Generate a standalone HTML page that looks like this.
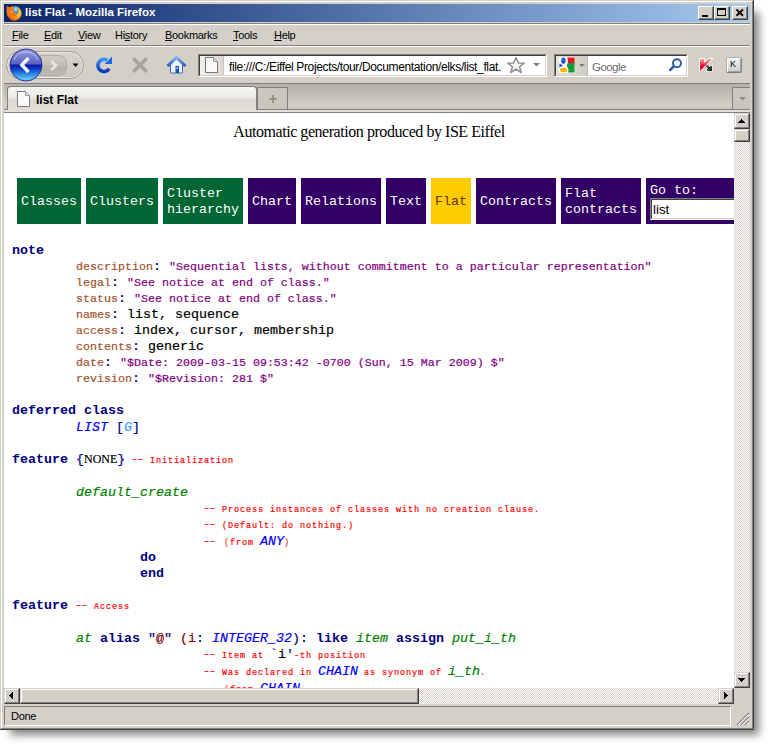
<!DOCTYPE html>
<html><head><meta charset="utf-8">
<style>
*{box-sizing:border-box}
html,body{margin:0;padding:0}
body{width:770px;height:746px;position:relative;overflow:hidden;background:#fff;font-family:"Liberation Sans",sans-serif}
.a{position:absolute}
#win{left:0;top:0;width:754px;height:730px;background:#d4d0c8}
#shd{left:10px;top:12px;width:749px;height:723px;background:rgba(0,0,0,0.48);filter:blur(4px)}
.ui{position:absolute;font-family:"Liberation Sans",sans-serif;font-size:12px;color:#000;white-space:nowrap;line-height:16px}
.mn{font-size:11px;letter-spacing:-0.3px}
.u{text-decoration:underline;text-underline-offset:1px}
.btn3d{position:absolute;background:#d4d0c8;border-style:solid;border-width:1px;border-color:#fff #404040 #404040 #fff;box-shadow:inset -1px -1px 0 #808080, inset 1px 1px 0 #d4d0c8}
.sb3d{position:absolute;background:#d4d0c8;border-style:solid;border-width:1px;border-color:#d4d0c8 #404040 #404040 #d4d0c8;box-shadow:inset -1px -1px 0 #808080, inset 1px 1px 0 #fff}
.chk{background-color:#fff;background-image:linear-gradient(45deg,#d4d0c8 25%,transparent 25%,transparent 75%,#d4d0c8 75%),linear-gradient(45deg,#d4d0c8 25%,transparent 25%,transparent 75%,#d4d0c8 75%);background-size:2px 2px;background-position:0 0,1px 1px}
.mono{font-family:"Liberation Mono",monospace;white-space:pre;-webkit-text-stroke:0.2px currentColor}
.mono b{-webkit-text-stroke:0}
.serif{font-family:"Liberation Serif",serif}
</style></head><body>
<div id="shd" class="a"></div>
<div id="win" class="a">
  <!-- frame lines -->
  <div class="a" style="left:1px;top:1px;width:751px;height:1px;background:#fff"></div>
  <div class="a" style="left:1px;top:1px;width:1px;height:727px;background:#fff"></div>
  <div class="a" style="left:752px;top:1px;width:1px;height:728px;background:#808080"></div>
  <div class="a" style="left:1px;top:728px;width:752px;height:1px;background:#808080"></div>
  <div class="a" style="left:753px;top:0;width:1px;height:730px;background:#404040"></div>
  <div class="a" style="left:0;top:729px;width:754px;height:1px;background:#404040"></div>

  <!-- title bar -->
  <div class="a" style="left:4px;top:4px;width:746px;height:18px;background:linear-gradient(to right,#0a246a,#a6caf0)"></div>
  <svg class="a" style="left:6px;top:5px" width="16" height="16" viewBox="0 0 16 16">
    <defs>
      <radialGradient id="glb" cx="0.5" cy="0.3" r="0.7"><stop offset="0" stop-color="#a8f0ff"/><stop offset="0.5" stop-color="#3a98e0"/><stop offset="1" stop-color="#1a3a90"/></radialGradient>
      <radialGradient id="fox" cx="0.75" cy="0.45" r="0.8"><stop offset="0" stop-color="#ffe040"/><stop offset="0.35" stop-color="#f8a020"/><stop offset="0.8" stop-color="#e06010"/><stop offset="1" stop-color="#b03008"/></radialGradient>
    </defs>
    <circle cx="9.6" cy="6" r="4.8" fill="url(#glb)"/>
    <path fill-rule="evenodd" fill="url(#fox)" d="M11.8,1.8 A7.4,7.4 0 1 1 2.2,4 L5.2,8.8 A3.9,3.9 0 1 0 11.4,3.6 Z"/>
    <path fill="#f07818" d="M0.8,0.5 L2.6,2.2 L5,1.8 L6.8,0.8 L7.2,3.2 L8.6,4.4 L7.6,6 L8.4,7.6 L10.6,8.6 L10.2,10.8 L7.8,10.2 L5.6,9.4 L4,11.5 L1.2,10.5 L0.4,6.5 Z"/>
    <path fill="#ffd090" d="M4,6.5 L6.5,6 L6,7.5 L4.5,7.5 Z" opacity="0.7"/>
  </svg>
  <div class="ui" style="left:25px;top:6px;color:#fff;font-weight:bold;font-size:11.5px;line-height:13px">list Flat - Mozilla Firefox</div>
  <!-- caption buttons -->
  <div class="btn3d" style="left:698px;top:6px;width:16px;height:14px"></div>
  <div class="a" style="left:702px;top:15px;width:6px;height:2px;background:#000"></div>
  <div class="btn3d" style="left:714px;top:6px;width:16px;height:14px"></div>
  <div class="a" style="left:717px;top:8px;width:9px;height:8px;border:1px solid #000;border-top-width:2px"></div>
  <div class="btn3d" style="left:732px;top:6px;width:16px;height:14px"></div>
  <svg class="a" style="left:732px;top:6px" width="16" height="14" viewBox="0 0 16 14"><path d="M4.5,3.5 L11,9.8 M11,3.5 L4.5,9.8" stroke="#000" stroke-width="1.9"/></svg>

  <!-- menubar separators -->
  <div class="a" style="left:4px;top:23px;width:746px;height:1px;background:#808080"></div>
  <div class="a" style="left:4px;top:24px;width:746px;height:1px;background:#fff"></div>
  <div class="ui mn" style="left:12px;top:27px"><span class="u">F</span>ile</div>
  <div class="ui mn" style="left:44px;top:27px"><span class="u">E</span>dit</div>
  <div class="ui mn" style="left:78px;top:27px"><span class="u">V</span>iew</div>
  <div class="ui mn" style="left:115px;top:27px">Hi<span class="u">s</span>tory</div>
  <div class="ui mn" style="left:165px;top:27px"><span class="u">B</span>ookmarks</div>
  <div class="ui mn" style="left:233px;top:27px"><span class="u">T</span>ools</div>
  <div class="ui mn" style="left:274px;top:27px"><span class="u">H</span>elp</div>
  <div class="a" style="left:4px;top:45px;width:746px;height:1px;background:#808080"></div>
  <div class="a" style="left:4px;top:46px;width:746px;height:1px;background:#fff"></div>

  <!-- nav toolbar -->
  <div class="a" style="left:6px;top:51px;width:78px;height:28px;border-radius:14px;background:linear-gradient(#d8d5ce,#ccc8c0);border:1px solid #a29e96;box-shadow:inset 0 0 0 1px #ebe8e2"></div>
  <div class="a" style="left:40px;top:55px;width:27px;height:21px;border-radius:0 8px 8px 0;background:linear-gradient(#cfcbc3 0%,#c4c0b8 50%,#b6b2aa 51%,#bebab2 100%);border:1px solid #b0aca4"></div>
  <svg class="a" style="left:47px;top:59px" width="14" height="13" viewBox="0 0 14 13"><path d="M4,2 L9,6.5 L4,11" fill="none" stroke="#e8e6e0" stroke-width="2.6"/></svg>
  <svg class="a" style="left:72px;top:63px" width="7" height="5" viewBox="0 0 7 5"><path d="M0.5,0.5 L6.5,0.5 L3.5,4 Z" fill="#000"/></svg>
  <svg class="a" style="left:9px;top:48px" width="35" height="35" viewBox="0 0 35 35">
    <defs>
      <linearGradient id="bk" x1="0" y1="0" x2="0" y2="1"><stop offset="0" stop-color="#9aa0e4"/><stop offset="0.47" stop-color="#5860c0"/><stop offset="0.5" stop-color="#0a14a0"/><stop offset="0.62" stop-color="#0a40c8"/><stop offset="1" stop-color="#68e0ff"/></linearGradient>
    </defs>
    <circle cx="17" cy="17" r="16" fill="url(#bk)" stroke="#2a2f9a" stroke-width="1"/><path d="M5,12 A13,13 0 0 1 29,12" fill="none" stroke="#c8ccf4" stroke-width="1" opacity="0.8"/>
    <path d="M19.5,10 L12.8,17 L19.5,24" fill="none" stroke="#f0f0f0" stroke-width="3.4" stroke-linejoin="miter"/>
  </svg>
  <!-- reload -->
  <svg class="a" style="left:95px;top:55px" width="19" height="19" viewBox="0 0 19 19">
    <defs><linearGradient id="rl" x1="0" y1="0" x2="0" y2="1"><stop offset="0" stop-color="#3c8ef0"/><stop offset="1" stop-color="#0838c0"/></linearGradient></defs>
    <path d="M12.2,5.2 A6.1,6.1 0 1 0 14.2,13.6" fill="none" stroke="url(#rl)" stroke-width="3.6"/>
    <path d="M9.6,9 L17,9 L17,1.6 Z" fill="#1a6ae8"/>
  </svg>
  <!-- stop -->
  <svg class="a" style="left:131px;top:56px" width="18" height="18" viewBox="0 0 18 18"><path d="M2.2,2.2 L15.8,15.8 M15.8,2.2 L2.2,15.8" stroke="#a6a49c" stroke-width="3.6"/></svg>
  <!-- home -->
  <svg class="a" style="left:166px;top:55px" width="21" height="19" viewBox="0 0 21 19">
    <defs><linearGradient id="hm" x1="0" y1="0" x2="0" y2="1"><stop offset="0" stop-color="#80b4f4"/><stop offset="1" stop-color="#2a58b8"/></linearGradient></defs>
    <path d="M4.5,9 L10.5,3.5 L16.5,9 L16.5,18 L4.5,18 Z" fill="#eaf3ff" stroke="#3a68c0" stroke-width="1"/>
    <path d="M1.5,11 L10.5,2.5 L19.5,11" fill="none" stroke="url(#hm)" stroke-width="3" stroke-linejoin="miter"/>
    <rect x="9.5" y="11" width="3.5" height="7" fill="#2050b0"/>
    <rect x="10.5" y="12" width="1.5" height="2" fill="#9cc0f0"/>
  </svg>
  <!-- url bar -->
  <div class="a" style="left:198px;top:54px;width:349px;height:23px;background:#fff;border-style:solid;border-width:1px;border-color:#808080 #fff #fff #808080"></div>
  <div class="a" style="left:199px;top:55px;width:347px;height:21px;border-style:solid;border-width:1px;border-color:#404040 #d4d0c8 #d4d0c8 #404040"></div>
  <div class="a" style="left:200px;top:56px;width:24px;height:19px;background:linear-gradient(to right,#f2f1ee,#dcd9d2);border-right:1px solid #c8c4bc"></div>
  <svg class="a" style="left:205px;top:57px" width="13" height="16" viewBox="0 0 13 16"><path d="M0.5,0.5 L8.5,0.5 L12.5,4.5 L12.5,15.5 L0.5,15.5 Z" fill="#f8f8f8" stroke="#777"/><path d="M8.5,0.5 L8.5,4.5 L12.5,4.5" fill="#ddd" stroke="#999"/></svg>
  <div class="ui" style="left:229px;top:59px;font-size:12px;letter-spacing:-0.36px">file:///C:/Eiffel Projects/tour/Documentation/elks/list_flat.</div>
  <svg class="a" style="left:506px;top:56px" width="20" height="18" viewBox="0 0 20 18"><path d="M10,1.5 L12.4,7 L18.2,7.2 L13.6,10.8 L15.3,16.5 L10,13.2 L4.7,16.5 L6.4,10.8 L1.8,7.2 L7.6,7 Z" fill="#f4f4f4" stroke="#909090" stroke-width="1.5" stroke-linejoin="round"/></svg>
  <svg class="a" style="left:533px;top:63px" width="7" height="4" viewBox="0 0 7 4"><path d="M0,0 L7,0 L3.5,3.5 Z" fill="#7a7a7a"/></svg>
  <!-- search bar -->
  <div class="a" style="left:554px;top:54px;width:134px;height:23px;background:#fff;border-style:solid;border-width:1px;border-color:#808080 #fff #fff #808080"></div>
  <div class="a" style="left:555px;top:55px;width:132px;height:21px;border-style:solid;border-width:1px;border-color:#404040 #d4d0c8 #d4d0c8 #404040"></div>
  <div class="a" style="left:556px;top:56px;width:32px;height:19px;background:linear-gradient(to right,#e4e2dc,#d0ccc4);border-right:1px solid #bdb9b1"></div>
  <svg class="a" style="left:559px;top:57px" width="16" height="16" viewBox="0 0 16 16">
    <rect x="0" y="0" width="16" height="16" rx="1.5" fill="#fff"/>
    <path d="M8.2,0.6 L15,0.6 Q15.6,0.6 15.6,1.5 L15.6,6.2 L8.6,6.2 Q9.6,3.2 8.2,0.6 Z" fill="#e8141a"/>
    <path d="M8.8,6 L15.6,6 L15.6,15.4 L9,15.4 Q10.2,12.5 8.6,10.6 Q7.2,9.2 8.8,6 Z" fill="#159a3a"/>
    <ellipse cx="4.4" cy="3.7" rx="2.3" ry="3.1" fill="#1a5fd0"/>
    <path d="M0.4,6.6 L4.2,8.6 L0.4,10.4 Z" fill="#1a5fd0"/>
    <ellipse cx="4.6" cy="13" rx="3.6" ry="2.3" fill="#f4b400"/>
  </svg>
  <svg class="a" style="left:579px;top:64px" width="6" height="4" viewBox="0 0 6 4"><path d="M0,0 L6,0 L3,3 Z" fill="#808080"/></svg>
  <div class="ui" style="left:592px;top:59px;font-size:11.5px;letter-spacing:-0.55px;color:#6d6d6d">Google</div>
  <svg class="a" style="left:668px;top:58px" width="15" height="14" viewBox="0 0 15 14"><circle cx="9" cy="5.2" r="4" fill="none" stroke="#2a5ea8" stroke-width="2"/><path d="M6.2,8 L1.5,12.7" stroke="#2a5ea8" stroke-width="2.6"/></svg>
  <!-- kaspersky -->
  <svg class="a" style="left:698px;top:57px" width="16" height="16" viewBox="0 0 16 16">
    <defs><linearGradient id="kr" x1="0" y1="0" x2="0" y2="1"><stop offset="0" stop-color="#f4b0b0"/><stop offset="0.45" stop-color="#e83040"/><stop offset="0.6" stop-color="#e00010"/><stop offset="1" stop-color="#e00010"/></linearGradient>
    <linearGradient id="ka" x1="0" y1="0" x2="1" y2="1"><stop offset="0" stop-color="#9a9a9a"/><stop offset="1" stop-color="#000"/></linearGradient></defs>
    <path d="M1.5,1.5 L6.5,1.5 L6.5,5.5 L10.5,1.5 L15,1.5 L1.5,15 Z" fill="url(#kr)" stroke="#fff" stroke-width="1" stroke-linejoin="round"/>
    <path d="M8,8 L10.5,10.5 L12.5,8.5 L14.5,8.5 L14.5,14.5 L8.5,14.5 L8.5,12.5 L10.5,10.5" fill="url(#ka)" stroke="#fff" stroke-width="0.8"/>
    <path d="M8,8 L11.5,11.5" stroke="url(#ka)" stroke-width="2.2"/>
  </svg>
  <div class="a" style="left:726px;top:57px;width:16px;height:16px;border-radius:2px;background:linear-gradient(#f2f2f2,#cfcfcf);border:1px solid;border-color:#b8b8b8 #8a8a8a #7a7a7a #a8a8a8;box-shadow:inset 1px 1px 0 #fff, inset -1px -1px 0 #a0a0a0"></div>
  <div class="ui" style="left:730px;top:60px;font-size:9px;line-height:9px;color:#000">K</div>
  <div class="a" style="left:4px;top:83px;width:746px;height:1px;background:#808080"></div>

  <!-- tab bar -->
  <div class="a" style="left:4px;top:84px;width:746px;height:25px;background:linear-gradient(#b3b0a8,#cfcbc3 75%,#d4d0c8 85%,#c9c5bd)"></div>
  <div class="a" style="left:4px;top:109px;width:746px;height:1px;background:#808080"></div>
  <div class="a" style="left:4px;top:110px;width:746px;height:2px;background:#e2dfd8"></div>
  <div class="a" style="left:4px;top:112px;width:746px;height:1px;background:#808080"></div>
  <!-- active tab -->
  <div class="a" style="left:7px;top:86px;width:250px;height:24px;border:1px solid #808080;border-bottom:none;border-radius:4px 4px 0 0;background:linear-gradient(#f5f4f1,#eceae5 45%,#dcd9d2 55%,#e2dfd8)"></div>
  <div class="a" style="left:8px;top:109px;width:248px;height:1px;background:#e2dfd8"></div>
  <svg class="a" style="left:17px;top:91px" width="13" height="16" viewBox="0 0 13 16"><path d="M0.5,0.5 L8.5,0.5 L12.5,4.5 L12.5,15.5 L0.5,15.5 Z" fill="#fafafa" stroke="#7a7a7a"/><path d="M8.5,0.5 L8.5,4.5 L12.5,4.5" fill="#e0e0e0" stroke="#9a9a9a"/></svg>
  <div class="ui" style="left:36px;top:92px;font-weight:bold;font-size:12px">list Flat</div>
  <!-- new tab btn -->
  <div class="a" style="left:257px;top:87px;width:31px;height:22px;border:1px solid #808080;border-bottom:none;background:linear-gradient(#cbc8c0,#c9c5bd)"></div>
  <svg class="a" style="left:269px;top:95px" width="8" height="8" viewBox="0 0 8 8"><path d="M4,0 L4,8 M0,4 L8,4" stroke="#858585" stroke-width="1.5"/></svg>
  <!-- tab list btn -->
  <div class="a" style="left:732px;top:87px;width:18px;height:22px;border-left:1px solid #808080;border-top:1px solid #808080;background:linear-gradient(#cbc8c0,#c9c5bd)"></div>
  <svg class="a" style="left:739px;top:97px" width="7" height="4" viewBox="0 0 7 4"><path d="M0,0 L7,0 L3.5,3.5 Z" fill="#8a8a8a"/></svg>

  <!-- content -->
  <div class="a" style="left:4px;top:113px;width:730px;height:575px;background:#fff;overflow:hidden">
<div class="serif" style="position:absolute;left:0;top:11px;width:730px;text-align:center;font-size:16px;letter-spacing:-0.45px;line-height:16px;color:#000;white-space:nowrap">Automatic generation produced by ISE Eiffel</div>
<div style="position:absolute;left:13px;top:65px;width:64px;height:46px;background:#006633"></div>
<div class="mono" style="position:absolute;left:17px;top:81px;font-size:13.333px;line-height:16px;-webkit-text-stroke:0;color:#fff">Classes</div>
<div style="position:absolute;left:82px;top:65px;width:72px;height:46px;background:#006633"></div>
<div class="mono" style="position:absolute;left:86px;top:81px;font-size:13.333px;line-height:16px;-webkit-text-stroke:0;color:#fff">Clusters</div>
<div style="position:absolute;left:159px;top:65px;width:80px;height:46px;background:#006633"></div>
<div class="mono" style="position:absolute;left:163px;top:73px;font-size:13.333px;line-height:16px;-webkit-text-stroke:0;color:#fff">Cluster
hierarchy</div>
<div style="position:absolute;left:244px;top:65px;width:48px;height:46px;background:#330066"></div>
<div class="mono" style="position:absolute;left:248px;top:81px;font-size:13.333px;line-height:16px;-webkit-text-stroke:0;color:#fff">Chart</div>
<div style="position:absolute;left:297px;top:65px;width:80px;height:46px;background:#330066"></div>
<div class="mono" style="position:absolute;left:301px;top:81px;font-size:13.333px;line-height:16px;-webkit-text-stroke:0;color:#fff">Relations</div>
<div style="position:absolute;left:382px;top:65px;width:40px;height:46px;background:#330066"></div>
<div class="mono" style="position:absolute;left:386px;top:81px;font-size:13.333px;line-height:16px;-webkit-text-stroke:0;color:#fff">Text</div>
<div style="position:absolute;left:427px;top:65px;width:40px;height:46px;background:#ffcc00"></div>
<div class="mono" style="position:absolute;left:431px;top:81px;font-size:13.333px;line-height:16px;-webkit-text-stroke:0;color:#663300">Flat</div>
<div style="position:absolute;left:472px;top:65px;width:80px;height:46px;background:#330066"></div>
<div class="mono" style="position:absolute;left:476px;top:81px;font-size:13.333px;line-height:16px;-webkit-text-stroke:0;color:#fff">Contracts</div>
<div style="position:absolute;left:557px;top:65px;width:80px;height:46px;background:#330066"></div>
<div class="mono" style="position:absolute;left:561px;top:73px;font-size:13.333px;line-height:16px;-webkit-text-stroke:0;color:#fff">Flat
contracts</div>
<div style="position:absolute;left:642px;top:65px;width:200px;height:46px;background:#330066"></div>
<div class="mono" style="position:absolute;left:646px;top:70px;font-size:13.333px;line-height:16px;-webkit-text-stroke:0;color:#fff">Go to:</div>
<div style="position:absolute;left:646px;top:85px;width:160px;height:22px;background:#fff;border-style:solid;border-width:1px;border-color:#808080 #fff #fff #808080"></div>
<div style="position:absolute;left:647px;top:86px;width:158px;height:20px;border-style:solid;border-width:1px;border-color:#404040 #d4d0c8 #d4d0c8 #404040"></div>
<div class="ui" style="left:649px;top:89px;font-size:13.333px;line-height:16px">list</div>
<div class="mono" style="position:absolute;left:8px;top:130px;font-size:13.333px;line-height:16px;color:#000;"><b style="color:#000080">note</b></div>
<div class="mono" style="position:absolute;left:72px;top:146px;font-size:13.333px;line-height:16px;color:#000;"><span style="color:#a0522d;font-size:11.667px">description</span><span style="color:#000080">:</span> <span style="color:#800080;font-size:11.667px">"Sequential lists, without commitment to a particular representation"</span></div>
<div class="mono" style="position:absolute;left:72px;top:162px;font-size:13.333px;line-height:16px;color:#000;"><span style="color:#a0522d;font-size:11.667px">legal</span><span style="color:#000080">:</span> <span style="color:#800080;font-size:11.667px">"See notice at end of class."</span></div>
<div class="mono" style="position:absolute;left:72px;top:178px;font-size:13.333px;line-height:16px;color:#000;"><span style="color:#a0522d;font-size:11.667px">status</span><span style="color:#000080">:</span> <span style="color:#800080;font-size:11.667px">"See notice at end of class."</span></div>
<div class="mono" style="position:absolute;left:72px;top:194px;font-size:13.333px;line-height:16px;color:#000;"><span style="color:#a0522d;font-size:11.667px">names</span><span style="color:#000080">:</span> list, sequence</div>
<div class="mono" style="position:absolute;left:72px;top:210px;font-size:13.333px;line-height:16px;color:#000;"><span style="color:#a0522d;font-size:11.667px">access</span><span style="color:#000080">:</span> index, cursor, membership</div>
<div class="mono" style="position:absolute;left:72px;top:226px;font-size:13.333px;line-height:16px;color:#000;"><span style="color:#a0522d;font-size:11.667px">contents</span><span style="color:#000080">:</span> generic</div>
<div class="mono" style="position:absolute;left:72px;top:242px;font-size:13.333px;line-height:16px;color:#000;"><span style="color:#a0522d;font-size:11.667px">date</span><span style="color:#000080">:</span> <span style="color:#800080;font-size:11.667px">"$Date: 2009-03-15 09:53:42 -0700 (Sun, 15 Mar 2009) $"</span></div>
<div class="mono" style="position:absolute;left:72px;top:258px;font-size:13.333px;line-height:16px;color:#000;"><span style="color:#a0522d;font-size:11.667px">revision</span><span style="color:#000080">:</span> <span style="color:#800080;font-size:11.667px">"$Revision: 281 $"</span></div>
<div class="mono" style="position:absolute;left:8px;top:290px;font-size:13.333px;line-height:16px;color:#000;"><b style="color:#000080">deferred class</b></div>
<div class="mono" style="position:absolute;left:72px;top:307px;font-size:13.333px;line-height:16px;color:#000;"><i style="color:#0000ff">LIST</i> <span style="color:#000080">[</span><i style="color:#3399ff">G</i><span style="color:#000080">]</span></div>
<div class="mono" style="position:absolute;left:8px;top:339px;font-size:13.333px;line-height:16px;color:#000;"><b style="color:#000080">feature</b> <span style="color:#000080">{</span><span class="serif" style="font-size:12px;line-height:0">NONE</span><span style="color:#000080">}</span></div>
<div class="mono" style="position:absolute;left:128px;top:340px;font-size:8.5px;letter-spacing:0.9px;line-height:16px;color:#ff0000;font-weight:normal;-webkit-text-stroke:0.2px #ff0000"><span style="position:relative;top:-1.5px">––</span> Initialization</div>
<div class="mono" style="position:absolute;left:72px;top:372px;font-size:13.333px;line-height:16px;color:#000;"><i style="color:#008000">default_create</i></div>
<div class="mono" style="position:absolute;left:200px;top:389px;font-size:8.5px;letter-spacing:0.9px;line-height:16px;color:#ff0000;font-weight:normal;-webkit-text-stroke:0.2px #ff0000"><span style="position:relative;top:-1.5px">––</span> Process instances of classes with no creation clause.</div>
<div class="mono" style="position:absolute;left:200px;top:405px;font-size:8.5px;letter-spacing:0.9px;line-height:16px;color:#ff0000;font-weight:normal;-webkit-text-stroke:0.2px #ff0000"><span style="position:relative;top:-1.5px">––</span> <span style="font-weight:normal">(</span>Default: do nothing.<span style="font-weight:normal">)</span></div>
<div class="mono" style="position:absolute;left:200px;top:422px;font-size:8.5px;letter-spacing:0.9px;line-height:16px;color:#ff0000;font-weight:normal;-webkit-text-stroke:0.2px #ff0000"><span style="position:relative;top:-1.5px">––</span> </div>
<div class="mono" style="position:absolute;left:220px;top:422px;font-size:8.5px;letter-spacing:0.9px;line-height:16px;color:#ff0000;font-weight:normal;-webkit-text-stroke:0px #ff0000">(</div>
<div class="mono" style="position:absolute;left:226px;top:422px;font-size:8.5px;letter-spacing:0.9px;line-height:16px;color:#ff0000;font-weight:normal;-webkit-text-stroke:0.2px #ff0000">from</div>
<div class="mono" style="position:absolute;left:256px;top:421px;font-size:13.333px;line-height:16px;color:#000;"><i style="color:#0000ff">ANY</i></div>
<div class="mono" style="position:absolute;left:280px;top:422px;font-size:8.5px;letter-spacing:0.9px;line-height:16px;color:#ff0000;font-weight:normal;-webkit-text-stroke:0px #ff0000">)</div>
<div class="mono" style="position:absolute;left:136px;top:437px;font-size:13.333px;line-height:16px;color:#000;"><b style="color:#000080">do</b></div>
<div class="mono" style="position:absolute;left:136px;top:453px;font-size:13.333px;line-height:16px;color:#000;"><b style="color:#000080">end</b></div>
<div class="mono" style="position:absolute;left:8px;top:485px;font-size:13.333px;line-height:16px;color:#000;"><b style="color:#000080">feature</b></div>
<div class="mono" style="position:absolute;left:72px;top:486px;font-size:8.5px;letter-spacing:0.9px;line-height:16px;color:#ff0000;font-weight:normal;-webkit-text-stroke:0.2px #ff0000"><span style="position:relative;top:-1.5px">––</span> Access</div>
<div class="mono" style="position:absolute;left:72px;top:518px;font-size:13.333px;line-height:16px;color:#000;"><i style="color:#008000">at</i> <b style="color:#000080">alias</b> <span style="color:#000080">"</span><span style="color:#800000">@</span><span style="color:#000080">"</span> <span style="color:#800000">(i</span><span style="color:#000080">:</span> <i style="color:#0000ff">INTEGER_32</i><span style="color:#000080">)</span><span style="color:#000080">:</span> <b style="color:#000080">like</b> <i style="color:#008000">item</i> <b style="color:#000080">assign</b> <i style="color:#008000">put_i_th</i></div>
<div class="mono" style="position:absolute;left:200px;top:535px;font-size:8.5px;letter-spacing:0.9px;line-height:16px;color:#ff0000;font-weight:normal;-webkit-text-stroke:0.2px #ff0000"><span style="position:relative;top:-1.5px">––</span> Item at </div>
<div class="mono" style="position:absolute;left:266px;top:534px;font-size:13.333px;line-height:16px;color:#000;"><span style="color:#000080">`</span>i<span style="color:#000080">'</span></div>
<div class="mono" style="position:absolute;left:290px;top:535px;font-size:8.5px;letter-spacing:0.9px;line-height:16px;color:#ff0000;font-weight:normal;-webkit-text-stroke:0.2px #ff0000">-th position</div>
<div class="mono" style="position:absolute;left:200px;top:552px;font-size:8.5px;letter-spacing:0.9px;line-height:16px;color:#ff0000;font-weight:normal;-webkit-text-stroke:0.2px #ff0000"><span style="position:relative;top:-1.5px">––</span> Was declared in </div>
<div class="mono" style="position:absolute;left:314px;top:551px;font-size:13.333px;line-height:16px;color:#000;"><i style="color:#0000ff">CHAIN</i></div>
<div class="mono" style="position:absolute;left:354px;top:552px;font-size:8.5px;letter-spacing:0.9px;line-height:16px;color:#ff0000;font-weight:normal;-webkit-text-stroke:0.2px #ff0000"> as synonym of </div>
<div class="mono" style="position:absolute;left:444px;top:551px;font-size:13.333px;line-height:16px;color:#000;"><i style="color:#008000">i_th</i></div>
<div class="mono" style="position:absolute;left:476px;top:552px;font-size:8.5px;letter-spacing:0.9px;line-height:16px;color:#ff0000;font-weight:normal;-webkit-text-stroke:0.2px #ff0000">.</div>
<div class="mono" style="position:absolute;left:200px;top:569px;font-size:8.5px;letter-spacing:0.9px;line-height:16px;color:#ff0000;font-weight:normal;-webkit-text-stroke:0.2px #ff0000"><span style="position:relative;top:-1.5px">––</span> </div>
<div class="mono" style="position:absolute;left:220px;top:569px;font-size:8.5px;letter-spacing:0.9px;line-height:16px;color:#ff0000;font-weight:normal;-webkit-text-stroke:0px #ff0000">(</div>
<div class="mono" style="position:absolute;left:226px;top:569px;font-size:8.5px;letter-spacing:0.9px;line-height:16px;color:#ff0000;font-weight:normal;-webkit-text-stroke:0.2px #ff0000">from</div>
<div class="mono" style="position:absolute;left:256px;top:568px;font-size:13.333px;line-height:16px;color:#000;"><i style="color:#0000ff">CHAIN</i></div>
  </div>
  <!-- vertical scrollbar -->
  <div class="a chk" style="left:734px;top:113px;width:16px;height:575px"></div>
  <div class="sb3d" style="left:734px;top:113px;width:16px;height:16px"></div>
  <svg class="a" style="left:734px;top:113px" width="16" height="16" viewBox="0 0 16 16"><g fill="#000" shape-rendering="crispEdges"><rect x="7" y="6" width="1" height="1"/><rect x="6" y="7" width="3" height="1"/><rect x="5" y="8" width="5" height="1"/><rect x="4" y="9" width="7" height="1"/></g></svg>
  <div class="sb3d" style="left:734px;top:129px;width:16px;height:13px"></div>
  <div class="sb3d" style="left:734px;top:672px;width:16px;height:16px"></div>
  <svg class="a" style="left:734px;top:672px" width="16" height="16" viewBox="0 0 16 16"><g fill="#000" shape-rendering="crispEdges"><rect x="4" y="6" width="7" height="1"/><rect x="5" y="7" width="5" height="1"/><rect x="6" y="8" width="3" height="1"/><rect x="7" y="9" width="1" height="1"/></g></svg>
  <!-- horizontal scrollbar -->
  <div class="a chk" style="left:4px;top:688px;width:730px;height:16px"></div>
  <div class="sb3d" style="left:4px;top:688px;width:16px;height:16px"></div>
  <svg class="a" style="left:4px;top:688px" width="16" height="16" viewBox="0 0 16 16"><g fill="#000" shape-rendering="crispEdges"><rect x="5" y="7" width="1" height="1"/><rect x="6" y="6" width="1" height="3"/><rect x="7" y="5" width="1" height="5"/><rect x="8" y="4" width="1" height="7"/></g></svg>
  <div class="sb3d" style="left:20px;top:688px;width:399px;height:16px"></div>
  <div class="sb3d" style="left:718px;top:688px;width:16px;height:16px"></div>
  <svg class="a" style="left:718px;top:688px" width="16" height="16" viewBox="0 0 16 16"><g fill="#000" shape-rendering="crispEdges"><rect x="6" y="4" width="1" height="7"/><rect x="7" y="5" width="1" height="5"/><rect x="8" y="6" width="1" height="3"/><rect x="9" y="7" width="1" height="1"/></g></svg>
  <!-- status bar -->
  <div class="a" style="left:4px;top:706px;width:727px;height:20px;border-style:solid;border-width:1px;border-color:#808080 #fff #fff #808080"></div>
  <div class="ui mn" style="left:11px;top:708px;letter-spacing:-0.3px">Done</div>
  <svg class="a" style="left:736px;top:712px" width="14" height="14" viewBox="0 0 14 14">
    <path d="M13,1 L1,13 M13,5 L5,13 M13,9 L9,13" stroke="#808080" stroke-width="1.2"/>
    <path d="M13,2.2 L2.2,13 M13,6.2 L6.2,13 M13,10.2 L10.2,13" stroke="#fff" stroke-width="0.9"/>
  </svg>
</div>
</body></html>
